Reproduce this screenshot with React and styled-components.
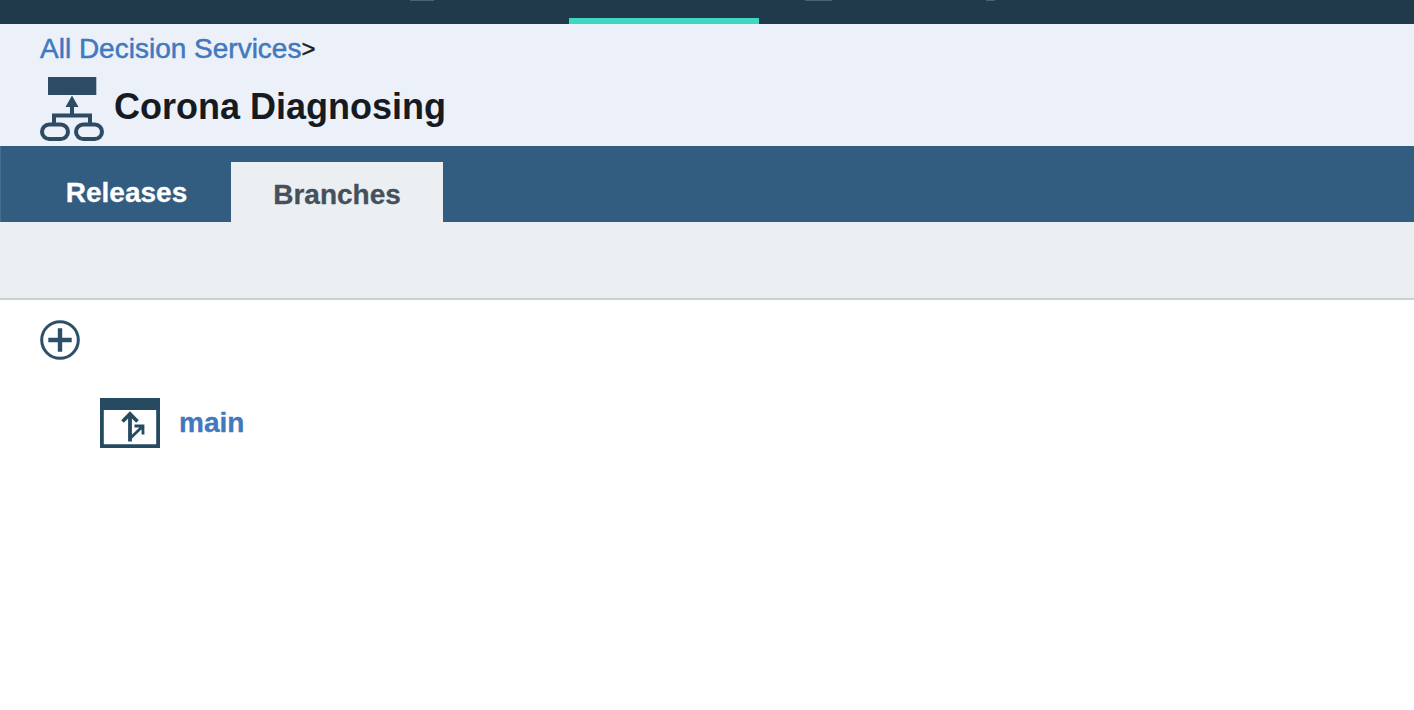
import React from 'react';
import styled, { createGlobalStyle } from 'styled-components';

const GlobalStyle = createGlobalStyle`
  *, *::before, *::after { box-sizing: border-box; }
  html, body { margin: 0; background: #fff; }
  body { font-family: "Liberation Sans", Arial, Helvetica, sans-serif; overflow: hidden; }
  a { text-decoration: none; }
  svg { display: block; flex: none; }
`;

const Page = styled.div`
  height: 710px;
  display: flex;
  flex-direction: column;
`;

const TopBar = styled.nav`
  height: 24px;
  flex: none;
  background: #203a4c;
  display: flex;
`;

const TopItem = styled.div`
  width: ${(p) => p.$width}px;
  display: flex;
  align-items: flex-start;
  padding-left: ${(p) => p.$inset || 0}px;
  border-bottom: 6px solid ${(p) => (p.$active ? '#40d7c2' : 'transparent')};
`;

const Glyph = styled.span`
  width: ${(p) => p.$width}px;
  height: 1px;
  background: #4c616e;
`;

const Header = styled.header`
  height: 122px;
  flex: none;
  background: #ecf1f9;
  padding: 8px 40px 0;
`;

const Crumbs = styled.div`
  height: 34px;
  line-height: 34px;
  font-size: 28px;
  color: #161b22;
  display: flex;
`;

const CrumbLink = styled.a`
  color: #4178be;
  -webkit-text-stroke: 0.5px #4178be;
`;

const Separator = styled.span`
  font-size: 24px;
  line-height: 34px;
  -webkit-text-stroke: 0.4px #161b22;
`;

const TitleRow = styled.div`
  display: flex;
  align-items: flex-start;
  margin-top: 11px;
`;

const Title = styled.h1`
  margin: 7px 0 0 10px;
  font-size: 36px;
  line-height: 46px;
  font-weight: 700;
  color: #161b22;
`;

const TabBar = styled.div`
  height: 76px;
  flex: none;
  background: #325d80;
  border-left: 1px solid #466d8c;
  padding: 16px 0 0 21px;
  display: flex;
`;

const Tab = styled.a`
  width: ${(p) => p.$width}px;
  height: 60px;
  text-align: center;
  font-size: 28px;
  font-weight: 700;
  line-height: ${(p) => (p.$active ? 66 : 62)}px;
  color: ${(p) => (p.$active ? '#464f5c' : '#fff')};
  background: ${(p) => (p.$active ? '#ebeff2' : 'transparent')};
  -webkit-text-stroke: 0.3px currentColor;
`;

const Toolbar = styled.div`
  height: 78px;
  flex: none;
  background: #ebeff2;
  border-bottom: 2px solid #c8d2d2;
`;

const Content = styled.main`
  flex: 1;
  padding: 20px 40px;
`;

const AddButton = styled.button`
  display: block;
  padding: 0;
  border: 0;
  background: none;
`;

const BranchRow = styled.div`
  display: flex;
  align-items: center;
  height: 52px;
  margin: 37px 0 0 59px;
`;

const BranchLink = styled.a`
  margin-left: 18px;
  font-size: 28px;
  line-height: 32px;
  font-weight: 700;
  color: #4178be;
  -webkit-text-stroke: 0.3px #4178be;
`;

const ServiceIcon = () => (
  <svg width="64" height="64" viewBox="0 0 64 64" fill="none" stroke="#2d4b62" strokeWidth="4">
    <path d="M8 0H56.3V18H8Z" fill="#2d4b62" stroke="none" />
    <path d="M32 18.5L38.5 30H25.5Z" fill="#2d4b62" stroke="none" />
    <path d="M32 28V38.5M14 47V38.5H50V47" />
    <rect x="2" y="47.5" width="26" height="14.5" rx="7.25" />
    <rect x="36" y="47.5" width="26" height="14.5" rx="7.25" />
  </svg>
);

const AddIcon = () => (
  <svg width="40" height="40" viewBox="0 0 40 40" fill="none" stroke="#2d5068">
    <circle cx="20" cy="20" r="18.3" strokeWidth="3" />
    <path d="M20 8.3V31.7M8.3 20H31.7" strokeWidth="4.4" />
  </svg>
);

const BranchIcon = () => (
  <svg width="62" height="52" viewBox="0 0 62 52" fill="none" stroke="#264a60">
    <path d="M1 1H61V51H1Z M4.8 13V47.2H57.2V13Z" fill="#264a60" fillRule="evenodd" stroke="none" />
    <path d="M31 44.5V17M23.5 24.5L31 17L38.5 24.5" strokeWidth="3.8" />
    <path d="M31 41.5L44 29M35.5 29H44V37.5" strokeWidth="2.8" />
  </svg>
);

export default function App() {
  return (
    <Page>
      <GlobalStyle />
      <TopBar>
        <TopItem $width={569} $inset={410}><Glyph $width={24} /></TopItem>
        <TopItem $width={190} $active />
        <TopItem $width={200} $inset={46}><Glyph $width={27} /></TopItem>
        <TopItem $width={200} $inset={27}><Glyph $width={9} /></TopItem>
      </TopBar>
      <Header>
        <Crumbs>
          <CrumbLink>All Decision Services</CrumbLink>
          <Separator>&gt;</Separator>
        </Crumbs>
        <TitleRow>
          <ServiceIcon />
          <Title>Corona Diagnosing</Title>
        </TitleRow>
      </Header>
      <TabBar>
        <Tab $width={209}>Releases</Tab>
        <Tab $width={212} $active>Branches</Tab>
      </TabBar>
      <Toolbar />
      <Content>
        <AddButton aria-label="Add branch"><AddIcon /></AddButton>
        <BranchRow>
          <BranchIcon />
          <BranchLink>main</BranchLink>
        </BranchRow>
      </Content>
    </Page>
  );
}
